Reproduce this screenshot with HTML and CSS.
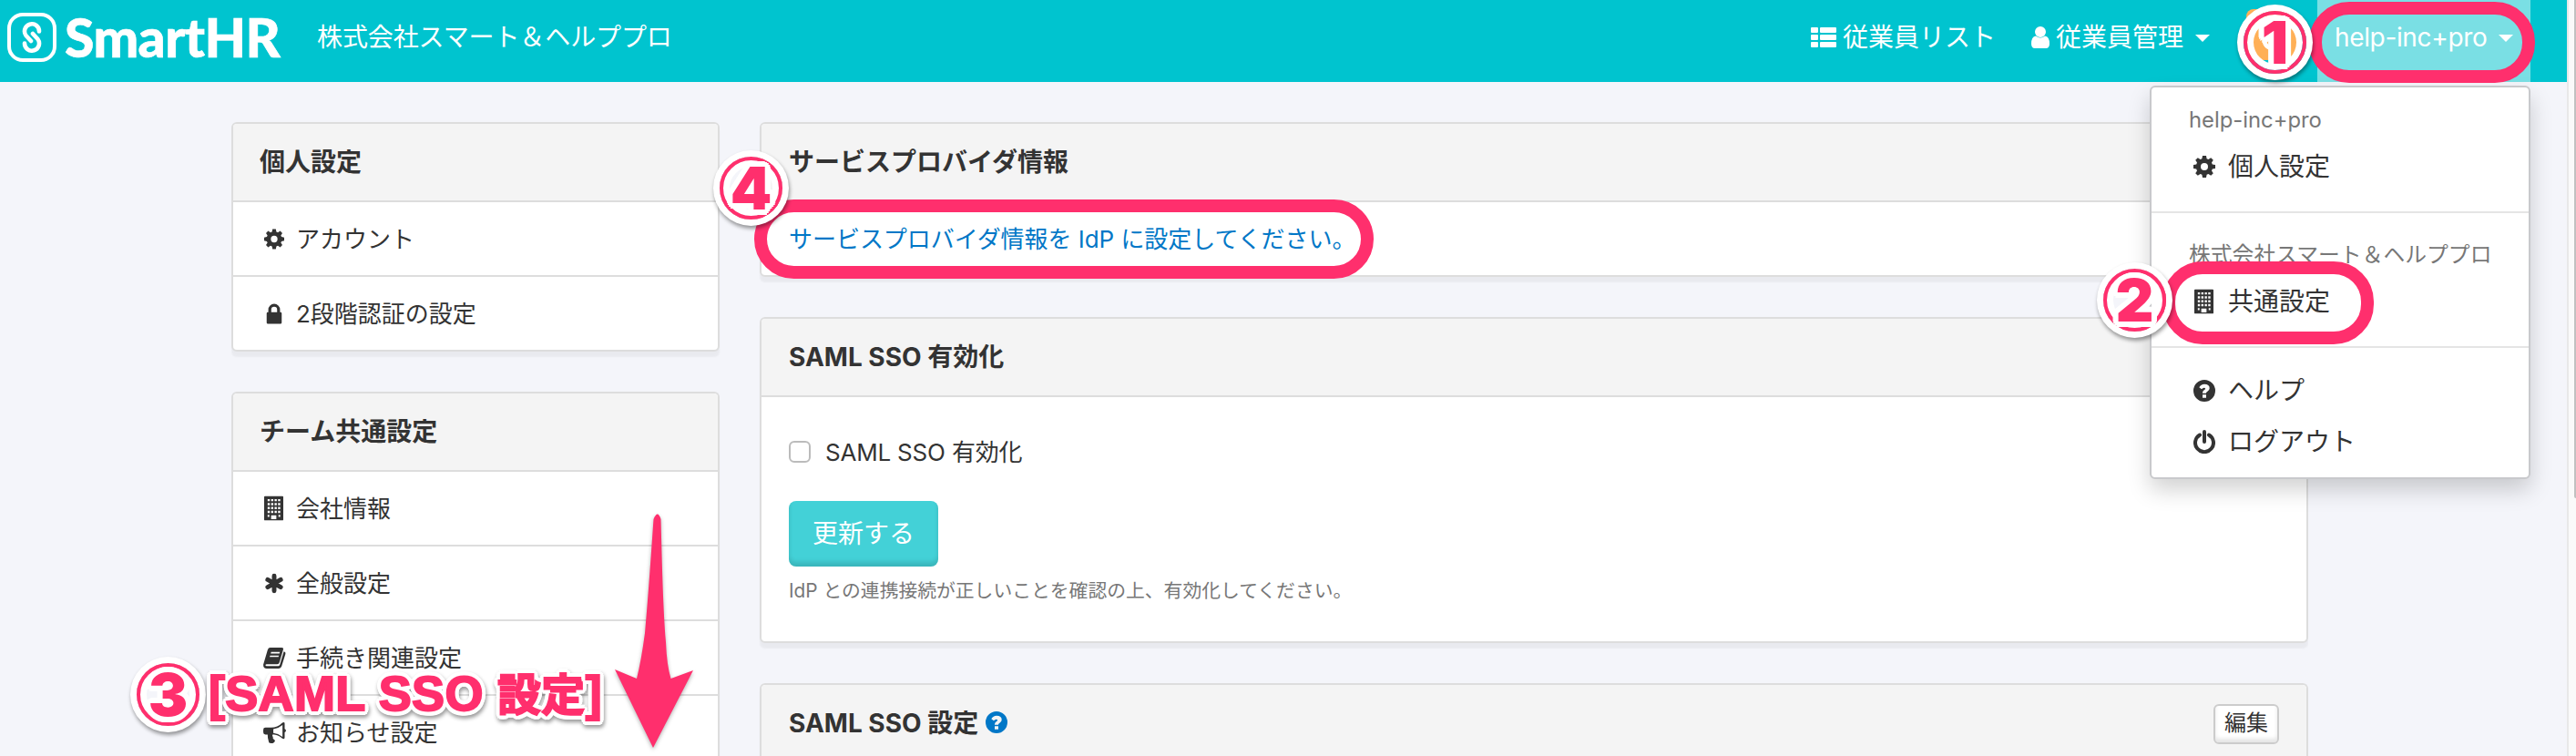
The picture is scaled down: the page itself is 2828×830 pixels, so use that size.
FILE: index.html
```html
<!DOCTYPE html>
<html lang="ja">
<head>
<meta charset="utf-8">
<title>SmartHR</title>
<link rel="stylesheet" href="styles.css">
</head>
<body>
<svg class="defs" aria-hidden="true">
  <symbol id="cog" viewBox="0 0 24 24"><path fill-rule="evenodd" d="M10 0h4l.6 3.2 1.8.8L19.200 2.200 21.800 4.800 20 7.600l.8 1.800L24 10v4l-3.200.6-.8 1.800 1.800 2.800-2.600 2.600L16.400 20l-1.800.8L14 24h-4l-.6-3.200-1.800-.8-2.800 1.800-2.600-2.600L4 16.400l-.8-1.800L0 14v-4l3.200-.6.8-1.800L2.200 4.800 4.800 2.200 7.600 4l1.800-.8zM12 8a4 4 0 1 0 0 8 4 4 0 0 0 0-8z"/></symbol>
  <symbol id="lock" viewBox="0 0 24 24"><path fill-rule="evenodd" d="M5 10V7a7 7 0 0 1 14 0v3h.5q1.500 0 1.500 1.500v11q0 1.500-1.500 1.500h-15Q3 24 3 22.500v-11Q3 10 4.500 10zM8.500 10h7V7a3.500 3.500 0 0 0-7 0z"/></symbol>
  <symbol id="building" viewBox="0 0 22 28"><path fill-rule="evenodd" d="M1 0h20q1 0 1 1v26q0 1-1 1H1q-1 0-1-1V1Q0 0 1 0zM8 22v4.500h6V22zM4 3.500V6h2.500V3.500zm4 0V6h2.500V3.500zm4 0V6h2.500V3.500zm4 0V6h2.500V3.500zM4 8v2.500h2.500V8zm4 0v2.500h2.500V8zm4 0v2.500h2.500V8zm4 0v2.500h2.500V8zM4 12.500V15h2.500v-2.500zm4 0V15h2.500v-2.500zm4 0V15h2.500v-2.500zm4 0V15h2.500v-2.500zM4 17v2.500h2.500V17zm4 0v2.500h2.500V17zm4 0v2.500h2.500V17zm4 0v2.500h2.500V17zM4 21.500V24h2v-2.500zm12.500 0V24h2v-2.500z"/></symbol>
  <symbol id="asterisk" viewBox="0 0 24 24"><path d="M12 3v18M4.200 7.500l15.600 9M19.800 7.500l-15.600 9" fill="none" stroke="currentColor" stroke-width="5.400" stroke-linecap="round"/></symbol>
  <symbol id="book" viewBox="0 0 26 24"><path fill-rule="evenodd" d="M8 0h13q2.500 0 1.800 2.400L18.500 17q-.6 2-2.600 2H4q-1.500 0-1.500 1 0 1 1.500 1h13.500q1 0 1.400-1.200L23.500 4.500q2.500.6 1.800 3L21 21.500Q20.200 24 17.700 24H4Q0 24 0 19.500L5 2.500Q5.800 0 8 0zM9 5l-.5 1.800h10L19 5zM7.800 9l-.5 1.800h10l.5-1.800z"/></symbol>
  <symbol id="horn" viewBox="0 0 26 24"><path fill-rule="evenodd" d="M23.500 0q1 0 1 1.500v6q1.500.5 1.500 2t-1.500 2v6q0 1.500-1 1.500-1.200 0-2-.8-4.500-3.800-10.500-4.300-1.500 1.500.2 3.100-1 1.500 2.300 3.800-.5 3.200-4.500 3.200-1.500 0-2.500-.8Q4.700 17.500 5 14H2.500Q0 14 0 11.500v-3Q0 6 2.500 6H9q7.500 0 12.500-5.200.8-.8 2-.8zM22 3.200Q17 7.300 11.500 7.900v4.300q5.500.6 10.500 4.400z"/></symbol>
  <symbol id="help" viewBox="0 0 24 24"><path fill-rule="evenodd" d="M12 0a12 12 0 1 1 0 24 12 12 0 0 1 0-24zM10 16.200v3.600h4v-3.600zM6.300 8.300l2.700 2q1.200-1.600 2.700-1.600 1.400 0 1.400 1 0 .7-1.400 1.500-1.800 1-1.800 3.500h4q0-1 1.300-1.700 2.500-1.400 2.500-3.700 0-4.500-5.600-4.500-3.800 0-5.800 3.500z"/></symbol>
  <symbol id="power" viewBox="0 0 24 26"><path d="M7 5.500A10 10 0 1 0 17 5.500M12 2v11" fill="none" stroke="currentColor" stroke-width="4" stroke-linecap="round"/></symbol>
  <symbol id="list" viewBox="0 0 28 22"><path d="M1 0h6q1 0 1 1v4q0 1-1 1H1Q0 6 0 5V1q0-1 1-1zM11 0h16q1 0 1 1v4q0 1-1 1H11q-1 0-1-1V1q0-1 1-1zM1 8h6q1 0 1 1v4q0 1-1 1H1q-1 0-1-1V9q0-1 1-1zM11 8h16q1 0 1 1v4q0 1-1 1H11q-1 0-1-1V9q0-1 1-1zM1 16h6q1 0 1 1v4q0 1-1 1H1q-1 0-1-1v-4q0-1 1-1zM11 16h16q1 0 1 1v4q0 1-1 1H11q-1 0-1-1v-4q0-1 1-1z"/></symbol>
  <symbol id="user" viewBox="0 0 20 24"><path d="M10 0a6 6 0 1 1 0 12 6 6 0 0 1 0-12zM5 10.500q5 4 10 0 5 .8 5 8.500 0 5-4 5H4q-4 0-4-5 0-7.700 5-8.500z"/></symbol>
  <symbol id="chain" viewBox="0 0 24 34"><path d="M20 10.500a8 8 0 1 0-14.500 4.500l5.500 6M4 23.500A8 8 0 1 0 18.500 19L13 13" fill="none" stroke="currentColor" stroke-width="4.600" stroke-linecap="round" stroke-linejoin="round"/></symbol>
</svg>

<header class="topbar">
  <div class="brand">
    <span class="logo-mark"><svg><use href="#chain"/></svg></span>
    <span class="logo-text">SmartHR</span>
  </div>
  <span class="company">株式会社スマート＆ヘルププロ</span>
  <nav class="nav">
    <a class="nav-link"><svg class="i-list"><use href="#list"/></svg>従業員リスト</a>
    <a class="nav-link staff"><svg class="i-user"><use href="#user"/></svg>従業員管理<i class="caret"></i></a>
    <span class="avatar"><svg><use href="#chain"/></svg></span>
    <a class="nav-link account">help-inc+pro<i class="caret"></i></a>
  </nav>
</header>

<main class="page">
  <aside class="side">
    <section class="card">
      <h2 class="card-head">個人設定</h2>
      <a class="row"><span class="ico"><svg class="i24"><use href="#cog"/></svg></span>アカウント</a>
      <a class="row"><span class="ico"><svg class="i24"><use href="#lock"/></svg></span>2段階認証の設定</a>
    </section>
    <section class="card">
      <h2 class="card-head">チーム共通設定</h2>
      <a class="row"><span class="ico"><svg class="ibld"><use href="#building"/></svg></span>会社情報</a>
      <a class="row"><span class="ico"><svg class="i24"><use href="#asterisk"/></svg></span>全般設定</a>
      <a class="row"><span class="ico"><svg class="iwide"><use href="#book"/></svg></span>手続き関連設定</a>
      <a class="row"><span class="ico"><svg class="iwide"><use href="#horn"/></svg></span>お知らせ設定</a>
    </section>
  </aside>
  <div class="content">
    <section class="card">
      <h2 class="card-head">サービスプロバイダ情報</h2>
      <a class="row link">サービスプロバイダ情報を IdP に設定してください。</a>
    </section>
    <section class="card">
      <h2 class="card-head">SAML SSO 有効化</h2>
      <div class="card-body">
        <label class="check"><span class="box"></span>SAML SSO 有効化</label>
        <button class="primary">更新する</button>
        <p class="note">IdP との連携接続が正しいことを確認の上、有効化してください。</p>
      </div>
    </section>
    <section class="card open">
      <h2 class="card-head">SAML SSO 設定<svg class="i-help"><use href="#help"/></svg><button class="edit">編集</button></h2>
    </section>
  </div>
</main>

<div class="menu">
  <div class="group">
    <p class="menu-head">help-inc+pro</p>
    <a class="item"><span class="ico"><svg class="i24"><use href="#cog"/></svg></span>個人設定</a>
  </div>
  <div class="group">
    <p class="menu-head">株式会社スマート＆ヘルププロ</p>
    <a class="item"><span class="ico"><svg class="ibld"><use href="#building"/></svg></span>共通設定</a>
  </div>
  <div class="group last">
    <a class="item"><span class="ico"><svg class="i24"><use href="#help"/></svg></span>ヘルプ</a>
    <a class="item"><span class="ico"><svg class="ipow"><use href="#power"/></svg></span>ログアウト</a>
  </div>
</div>

<div class="scrollbar"><div class="thumb"></div></div>

<div class="mark mark-1"></div>
<div class="mark mark-2"></div>
<div class="mark mark-4"></div>
<div class="badge badge-1">1</div>
<div class="badge badge-2">2</div>
<div class="badge badge-3">3</div>
<div class="badge badge-4">4</div>
<div class="callout">[SAML SSO <span>設定</span>]</div>
<svg class="arrow" viewBox="0 0 100 270"><path d="M47.500 13q4.500-11 8 0C57 70 58 110 61 148Q62 173 66.500 188L91 179 47 264 5 178 29 188Q34 168 38 138C42 93 45 48 47.500 13z"/></svg>
</body>
</html>
```
FILE: styles.css
```css
* { box-sizing: border-box; }
html { height: 830px; overflow: hidden; }
body {
  margin: 0;
  position: relative;
  width: 2828px;
  height: 830px;
  overflow: hidden;
  background: #f4f5fa;
  color: #333;
  font-family: Inter, "Noto Sans CJK JP", sans-serif;
  font-size: 26px;
}
h2, p { margin: 0; }
svg { fill: currentColor; display: block; flex: none; }
.defs { position: absolute; width: 0; height: 0; }

/* top bar */
.topbar {
  display: flex;
  width: 2818px;
  height: 90px;
  padding-left: 8px;
  background: #00c4cf;
  color: #fff;
  font-size: 28px;
  line-height: 82px;
}
.brand { display: flex; width: 340px; }
.logo-mark {
  display: flex;
  align-items: center;
  justify-content: center;
  width: 54px;
  height: 54px;
  margin: 14px 9px 0 0;
  border: 4px solid #fff;
  border-radius: 17px;
}
.logo-mark svg { width: 24px; height: 34px; }
.logo-text { font: 900 59px/82px Lato, sans-serif; letter-spacing: -.6px; -webkit-text-stroke: .6px #fff; }
.company { white-space: nowrap; letter-spacing: -.1px; }
.nav { display: flex; margin-left: auto; padding-right: 40px; }
.nav-link { display: flex; align-items: center; height: 82px; white-space: nowrap; }
.i-list { width: 28px; height: 22px; margin-right: 7px; }
.staff { margin-left: 39px; }
.i-user { width: 20px; height: 24px; margin-right: 7px; }
.caret {
  margin: 2px 0 0 13px;
  border: 8px solid transparent;
  border-top-color: #fff;
  border-bottom: 0;
}
.avatar {
  display: flex;
  align-items: center;
  justify-content: center;
  width: 56px;
  height: 56px;
  margin: 10px 22px 0 40px;
  border-radius: 8px;
  background: #ffb057;
}
.avatar svg { width: 28px; height: 34px; }
.account { width: 234px; height: 90px; padding: 0 0 8px 19px; background: #7adfe4; letter-spacing: -.35px; }

/* cards */
.page { display: flex; gap: 44px; width: 2280px; height: 740px; margin-left: 254px; padding-top: 44px; overflow: hidden; }
.side { width: 536px; }
.content { width: 1700px; }
.card {
  margin-bottom: 44px;
  border: 2px solid #ddd;
  border-radius: 6px;
  background: #fff;
  box-shadow: 0 6px 2px rgba(0, 0, 0, .045);
}
.side .card:last-child, .open { margin-bottom: 0; }
.open { height: 80px; border-bottom: 0; border-radius: 6px 6px 0 0; overflow: hidden; }
.side .card:last-child { height: 400px; border-bottom: 0; border-radius: 6px 6px 0 0; overflow: hidden; }
.card-head {
  display: flex;
  align-items: center;
  height: 84px;
  padding: 0 30px 4px;
  background: #f4f4f4;
  border-radius: 4px 4px 0 0;
  font-size: 28px;
  font-weight: 700;
}
.side .card-head { padding-left: 29px; }
.row { display: flex; align-items: center; height: 82px; padding: 0 30px 4px; border-top: 2px solid #ddd; }
.ico { display: flex; justify-content: center; width: 30px; margin-right: 9px; }
.row .ico { margin-top: 4px; }
.i24 { width: 24px; height: 24px; }
.row .i24 { width: 22px; height: 23px; }
.ibld { width: 21px; height: 28px; margin-right: 2px; }
.iwide { width: 25px; height: 23px; }
.ipow { width: 24px; height: 26px; }
.link { color: #0077c7; letter-spacing: -.04px; }
.card-body { height: 270px; padding: 38px 30px; border-top: 2px solid #ddd; }
.check { display: flex; align-items: center; height: 40px; letter-spacing: -.2px; }
.box {
  width: 24px;
  height: 24px;
  margin: 3px 16px 0 0;
  border: 2px solid #bbb;
  border-radius: 6px;
  background: #fff;
}
.primary {
  display: block;
  width: 164px;
  height: 72px;
  margin: 36px 0 13px;
  padding: 0 0 4px;
  border: 0;
  border-radius: 8px;
  background: #43d1d7;
  box-shadow: inset 0 -5px 5px rgba(0, 0, 0, .13);
  color: #fff;
  font: 28px Inter, "Noto Sans CJK JP", sans-serif;
}
.note { color: #777; font-size: 20.800px; line-height: 28px; }
.i-help { width: 24px; height: 24px; margin: 2px 0 0 8px; color: #0077c7; }
.edit {
  width: 72px;
  height: 44px;
  margin: 6px 0 0 auto;
  padding: 0 0 3px;
  border: 2px solid #ccc;
  border-radius: 6px;
  background: #fff;
  box-shadow: inset 0 -4px 4px rgba(0, 0, 0, .1);
  color: #333;
  font: 24px/36px Inter, "Noto Sans CJK JP", sans-serif;
}

/* account menu */
.menu {
  position: absolute;
  left: 2360px;
  top: 94px;
  width: 418px;
  height: 432px;
  border: 2px solid #c8c9cc;
  border-radius: 6px;
  background: #fff;
  box-shadow: 0 12px 24px rgba(0, 0, 0, .175);
  font-size: 28px;
}
.group { height: 148px; padding: 26px 41px 0; border-bottom: 2px solid #e5e5e5; }
.group:first-child { height: 138px; padding-top: 16px; }
.last { padding-top: 18px; border: 0; }
.menu-head { height: 42px; color: #777; font-size: 23.800px; line-height: 40px; white-space: nowrap; }
.item { display: flex; align-items: center; height: 56px; padding-bottom: 2px; }
.item .ico { margin: 4px 11px 0 2px; }

.scrollbar { position: absolute; right: 0; top: 0; width: 10px; height: 830px; background: #fafafa; border-left: 2px solid #e8e8e8; }
.thumb { width: 2px; height: 547px; margin-left: auto; background: #c1c1c1; border-radius: 0 0 0 2px; }

/* annotations */
.mark { position: absolute; border: 14px solid #ff2f6d; border-radius: 44px; }
.mark-1 { left: 2535px; top: 2px; width: 248px; height: 89px; }
.mark-2 { left: 2374px; top: 287px; width: 232px; height: 91px; }
.mark-4 { left: 828px; top: 219px; width: 680px; height: 87px; }
.badge {
  position: absolute;
  width: 69px;
  height: 69px;
  border: 4px solid #ff2f6d;
  border-radius: 50%;
  box-shadow: 0 0 0 7px #fff, 1px 3px 4px 7px rgba(0, 0, 0, .4), inset 0 0 0 7px #fff;
  color: #ff2f6d;
  font: 900 65px/61px Inter, Arial, sans-serif;
  text-align: center;
  text-shadow: 6px 0 #fff, 5.500px 2.300px #fff, 4.200px 4.200px #fff, 2.300px 5.500px #fff, 0 6px #fff, -2.300px 5.500px #fff, -4.200px 4.200px #fff, -5.500px 2.300px #fff, -6px 0 #fff, -5.500px -2.300px #fff, -4.200px -4.200px #fff, -2.300px -5.500px #fff, 0 -6px #fff, 2.300px -5.500px #fff, 4.200px -4.200px #fff, 5.500px -2.300px #fff;
}
.badge-1 { left: 2463px; top: 12px; }
.badge-2 { left: 2309px; top: 295px; }
.badge-3 { left: 150px; top: 728px; }
.badge-4 { left: 790px; top: 172px; }
.callout {
  position: absolute;
  left: 229px;
  top: 731px;
  color: #ff2f6d;
  font: 700 54px/60px "Liberation Sans", "Noto Sans CJK JP", sans-serif;
  letter-spacing: .3px;
  white-space: nowrap;
  -webkit-text-stroke: 2px #ff2f6d;
  text-shadow: 5px 0 #fff, 4.600px 1.900px #fff, 3.500px 3.500px #fff, 1.900px 4.600px #fff, 0 5px #fff, -1.900px 4.600px #fff, -3.500px 3.500px #fff, -4.600px 1.900px #fff, -5px 0 #fff, -4.600px -1.900px #fff, -3.500px -3.500px #fff, -1.900px -4.600px #fff, 0 -5px #fff, 1.900px -4.600px #fff, 3.500px -3.500px #fff, 4.600px -1.900px #fff;
  filter: drop-shadow(1px 3px 2px rgba(0, 0, 0, .4));
}
.callout span { font-size: 48px; }
.arrow { position: absolute; left: 670px; top: 557px; width: 100px; height: 270px; fill: #ff2f6d; filter: drop-shadow(0 2px 2px rgba(0, 0, 0, .3)); }
```
